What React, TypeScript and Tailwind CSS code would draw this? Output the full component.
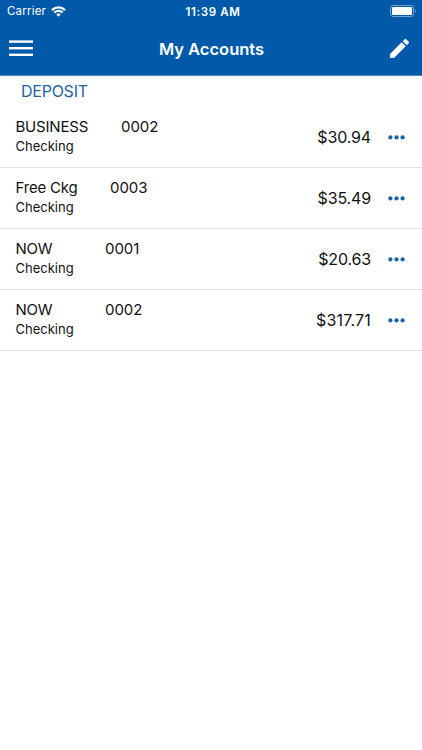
import React, { useState } from "react";

type TAccount = {
  id: number;
  name: string;
  number: string;
  kind: string;
  balance: string;
  nameWidth: string;
  balanceSpacing: string;
};

const accounts: TAccount[] = [
  { id: 1, name: "BUSINESS", number: "0002", kind: "Checking", balance: "$30.94", nameWidth: "w-[105.5px]", balanceSpacing: "tracking-[-0.15px]" },
  { id: 2, name: "Free Ckg", number: "0003", kind: "Checking", balance: "$35.49", nameWidth: "w-[94.5px]", balanceSpacing: "tracking-[-0.15px]" },
  { id: 3, name: "NOW", number: "0001", kind: "Checking", balance: "$20.63", nameWidth: "w-[89.5px]", balanceSpacing: "tracking-[-0.15px]" },
  { id: 4, name: "NOW", number: "0002", kind: "Checking", balance: "$317.71", nameWidth: "w-[89.5px]", balanceSpacing: "tracking-[0.2px]" },
];

const StatusBar = () => {
  return (
    <div className="grid h-[22px] grid-cols-3 items-center pl-[7px] pr-[6px] text-[11px] leading-none">
      <div className="flex items-center gap-[5px]">
        <span className="text-[11.5px] leading-[14px] tracking-[0.2px]">Carrier</span>
        <svg width="15" height="11" viewBox="0 0 15 11" fill="none" stroke="white" strokeWidth="2.2">
          <path d="M1 4.1a9.2 9.2 0 0 1 13 0" />
          <path d="M3.4 6.6a5.8 5.8 0 0 1 8.2 0" />
          <path d="M7.5 10.8 5.3 8.6a3.1 3.1 0 0 1 4.4 0z" fill="white" stroke="none" />
        </svg>
      </div>
      <span className="pl-[3px] pt-px text-center text-[11.5px] font-semibold leading-[14px] tracking-[0.65px]">11:39 AM</span>
      <svg className="justify-self-end" width="26" height="12" viewBox="0 0 26 12">
        <rect x="0.5" y="0.5" width="23" height="11" rx="2.7" fill="none" stroke="white" strokeOpacity="0.45" />
        <rect x="2" y="2" width="20" height="8" rx="1.3" fill="white" />
        <path d="M24.8 4.2c1.3.5 1.3 3.1 0 3.6z" fill="white" fillOpacity="0.5" />
      </svg>
    </div>
  );
};

const AccountRow = ({ account, onMore }: { account: TAccount; onMore: () => void }) => {
  return (
    <li className="flex h-[61px] items-center border-b border-[#e2e2e2] pl-[15.5px] pr-[17px]">
      <div className="flex-1 pb-[2px]">
        <div className="flex text-[15px] leading-5">
          <span className={`${account.nameWidth} tracking-[-0.2px]`}>{account.name}</span>
          <span className="tracking-[-0.05px]">{account.number}</span>
        </div>
        <div className="text-[13px] leading-[19px]">{account.kind}</div>
      </div>
      <span className={`text-base ${account.balanceSpacing}`}>{account.balance}</span>
      <button onClick={onMore} aria-label="More" className="ml-[17px] cursor-pointer">
        <svg className="block" width="17" height="5" viewBox="0 0 17 5" fill="#1c62a8">
          <circle cx="2.4" cy="2.4" r="2.15" />
          <circle cx="8.5" cy="2.4" r="2.15" />
          <circle cx="14.6" cy="2.4" r="2.15" />
        </svg>
      </button>
    </li>
  );
};

const App = () => {
  const [, setSelected] = useState<number | null>(null);

  return (
    <div className="min-h-screen w-full bg-white font-['Inter','Liberation_Sans',sans-serif] text-[#111]">
      <header className="h-[76px] border-b border-[#4c84bd] bg-[#005aa9] text-white">
        <StatusBar />
        <div className="flex h-[53px] items-center justify-between pl-[9px] pr-[13px]">
          <button aria-label="Menu" className="cursor-pointer">
            <svg className="block" width="24" height="17" viewBox="0 0 24 17" fill="white">
              <rect y="0.4" width="24" height="2.4" />
              <rect y="7" width="24" height="2.4" />
              <rect y="13.6" width="24" height="2.4" />
            </svg>
          </button>
          <h1 className="pt-[2px] text-[16.5px] font-semibold">My Accounts</h1>
          <button aria-label="Edit" className="cursor-pointer">
            <svg className="block" width="19" height="19" viewBox="3 3 18 18" fill="white">
              <path d="M3 17.25V21h3.75L17.81 9.94l-3.75-3.75L3 17.25zM20.71 7.04a1 1 0 0 0 0-1.41l-2.34-2.34a1 1 0 0 0-1.41 0l-1.83 1.83 3.75 3.75 1.83-1.83z" />
            </svg>
          </button>
        </div>
      </header>
      <h2 className="h-[31px] pl-[21px] text-base leading-[30px] tracking-[-0.25px] text-[#1f62a3]">DEPOSIT</h2>
      <ul>
        {accounts.map((account) => (
          <AccountRow key={account.id} account={account} onMore={() => setSelected(account.id)} />
        ))}
      </ul>
    </div>
  );
};

export default App;
